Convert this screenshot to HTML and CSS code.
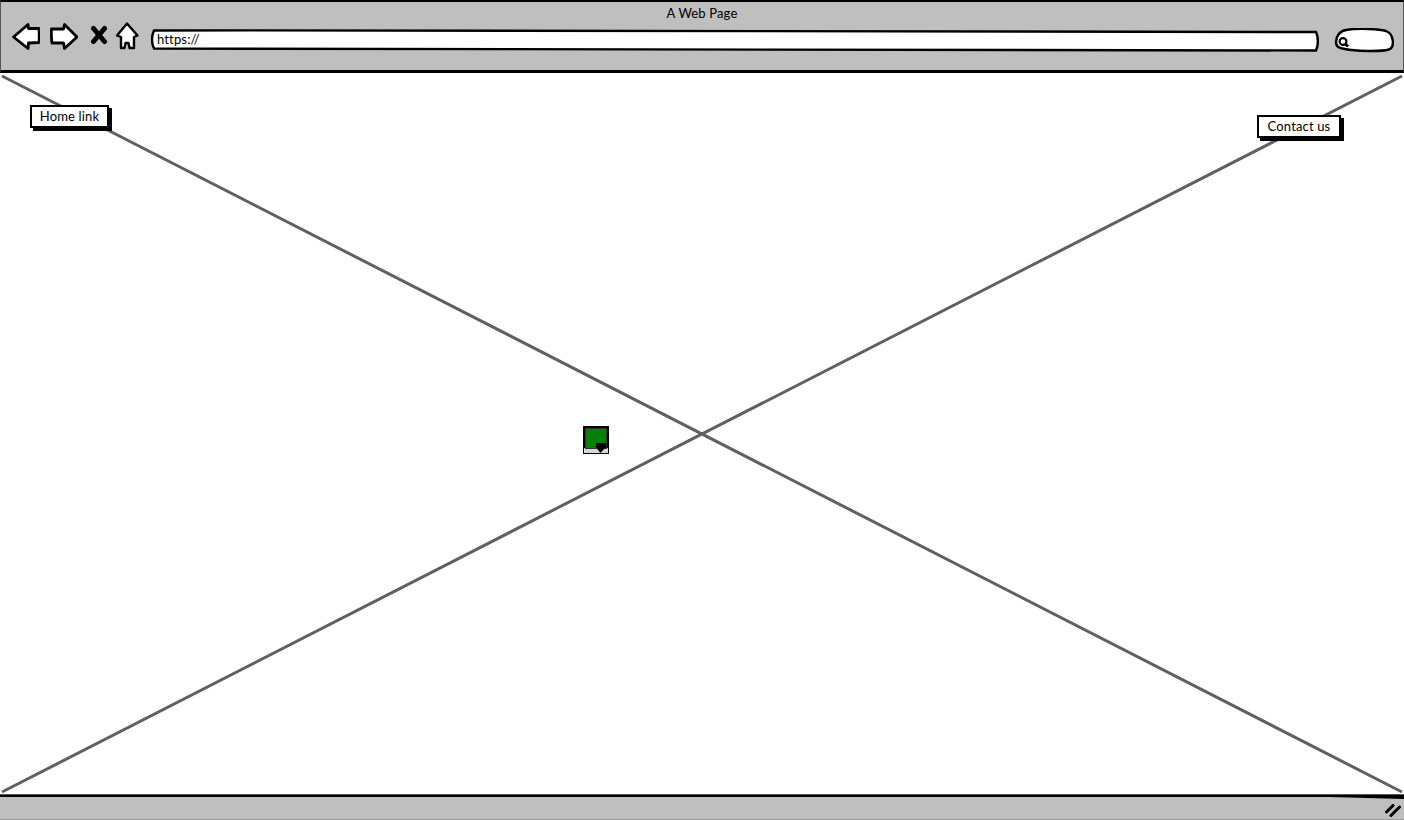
FILE: index.html
```html
<!DOCTYPE html>
<html lang="en">
<head>
    <meta charset="UTF-8">
    <meta name="viewport" content="width=device-width, initial-scale=1.0">
    <title>A Web Page</title>
    <link rel="stylesheet" href="styles.css">
</head>
<body>
    <div id="browser">
        <header id="topbar">
            <div id="page-title">A Web Page</div>
            <div id="toolbar">
                <svg class="nav-icon back" width="28" height="27" viewBox="0 0 28 27">
                    <path d="M1.5 14 L16 1.5 L16.5 5.5 L27 5.5 Q27.5 12 27 19.5 L16.5 20 L16 25.5 Z" fill="#fff" stroke="#000" stroke-width="2.8" stroke-linejoin="round"/>
                </svg>
                <svg class="nav-icon forward" width="28" height="27" viewBox="0 0 28 27">
                    <path d="M27 14 L14.5 1.5 L13.5 6 L1.5 6 Q1 13 2 20 L13.5 20 L14.5 25.5 Z" fill="#fff" stroke="#000" stroke-width="2.8" stroke-linejoin="round"/>
                </svg>
                <svg class="nav-icon stop" width="18" height="20" viewBox="0 0 18 20">
                    <path d="M3.5 3.5 L14.5 16.5 M14.5 3.5 L3.5 16.5" fill="none" stroke="#000" stroke-width="5" stroke-linecap="round"/>
                </svg>
                <svg class="nav-icon home" width="23" height="28" viewBox="0 0 23 28">
                    <path d="M11 1.5 L21.5 13.5 L18 15 L18 26 L13.5 26 L12.5 21 L9.5 21 L8.5 26 L5 26 L5 15 L1 13.5 Z" fill="#fff" stroke="#000" stroke-width="2.4" stroke-linejoin="round"/>
                </svg>
                <div id="url-box">
                    <svg id="url-outline" width="1168" height="23" viewBox="0 0 1168 23">
                        <path d="M3 1.5 C400 1 800 1 1165 3 C1167.5 8 1167.5 16 1165 21.5 C800 21 400 20.5 3 19.5 C0.5 14 0.5 7 3 1.5 Z" fill="#fff" stroke="#000" stroke-width="2.4"/>
                    </svg>
                    <span id="url-text">https://</span>
                </div>
                <svg id="search-box" width="61" height="25" viewBox="0 0 61 25">
                    <path d="M2 14 C2 8 6 3 12 2 C24 0 46 1 52 3 C60 6 61 19 55 21.5 C46 24 20 23 11 21 C5 20 2 19 2 14 Z" fill="#fff" stroke="#000" stroke-width="2.4"/>
                    <circle cx="9" cy="13.5" r="3.4" fill="none" stroke="#000" stroke-width="2.2"/>
                    <path d="M11.5 16 L14 18.5" stroke="#000" stroke-width="2.6"/>
                </svg>
            </div>
        </header>

        <main id="canvas">
            <svg id="placeholder" width="1404" height="722" viewBox="0 0 1404 722">
                <path d="M2 3 L1402 719 M1402 3 L2 719" stroke="#606060" stroke-width="3" fill="none"/>
            </svg>
            <a id="home-link" class="link-button">Home link</a>
            <a id="contact-link" class="link-button">Contact us</a>
            <svg id="chat-icon" width="26" height="28" viewBox="0 0 26 28">
                <rect width="26" height="28" fill="#000"/>
                <rect x="1" y="22" width="24" height="5" fill="#d8d8d8"/>
                <rect x="2" y="2" width="22" height="21" fill="#333"/>
                <rect x="3" y="3" width="20" height="19" fill="#087f08"/>
                <path d="M13 17 H23 V22 H22 L17.5 27 L13.5 22 H13 Z" fill="#000"/>
            </svg>
        </main>

        <footer id="statusbar">
            <svg id="status-wedge" width="74" height="2" viewBox="0 0 74 2">
                <path d="M0 0 H74 V2 Z" fill="#000"/>
            </svg>
            <svg id="resize-grip" width="16" height="13" viewBox="0 0 16 13">
                <path d="M1.5 8 L8 1.5 M6 11.5 L14.5 3" stroke="#000" stroke-width="3" stroke-linecap="round"/>
            </svg>
        </footer>
    </div>
</body>
</html>
```

FILE: styles.css
```css
body {
    margin: 0;
    font-family: 'Lato', 'Open Sans', sans-serif;
    letter-spacing: 0.15px;
    color: black;
    background-color: white;
}

#browser {
    width: 1404px;
    height: 820px;
    display: flex;
    flex-direction: column;
    overflow: hidden;
}

#topbar {
    height: 73px;
    box-sizing: border-box;
    background-color: #bfbfbf;
    border-top: 2px solid black;
    border-left: 1px solid #555;
    border-right: 1px solid #555;
    border-bottom: 3px solid black;
}

#page-title {
    height: 20px;
    line-height: 22px;
    font-size: 13px;
    text-align: center;
}

#toolbar {
    display: flex;
    align-items: flex-start;
    padding-left: 11px;
}

.nav-icon {
    flex-shrink: 0;
}

.back,
.forward {
    margin-top: 1px;
}

.forward {
    margin-left: 10px;
}

.stop {
    margin-left: 12px;
    margin-top: 3px;
}

.home {
    margin-left: 8px;
}

#url-box {
    position: relative;
    width: 1168px;
    height: 23px;
    margin-left: 12px;
    margin-top: 7px;
    font-size: 13px;
    line-height: 21px;
}

#url-outline {
    position: absolute;
    top: 0;
    left: 0;
}

#url-text {
    position: relative;
    margin-left: 6px;
}

#search-box {
    margin-left: 15px;
    margin-top: 6px;
}

#canvas {
    position: relative;
    flex: 1;
    background-color: white;
}

#placeholder {
    position: absolute;
    top: 0;
    left: 0;
}

.link-button {
    position: absolute;
    box-sizing: border-box;
    height: 23px;
    line-height: 19px;
    font-size: 13px;
    text-align: center;
    background-color: white;
    border: 2px solid black;
    box-shadow: 3px 3px 0 black;
}

#home-link {
    top: 32px;
    left: 30px;
    width: 79px;
}

#contact-link {
    top: 42px;
    left: 1257px;
    width: 84px;
}

#chat-icon {
    position: absolute;
    top: 353px;
    left: 583px;
}

#statusbar {
    position: relative;
    height: 25px;
    box-sizing: border-box;
    background-color: #bfbfbf;
    border-top: 2px solid black;
    border-bottom: 1px solid #999;
    box-shadow: 0 -1px 0 #555;
    display: flex;
    justify-content: flex-end;
    align-items: flex-end;
    padding: 0 3px 2px 0;
}

#status-wedge {
    position: absolute;
    top: 0;
    right: 0;
}
```
